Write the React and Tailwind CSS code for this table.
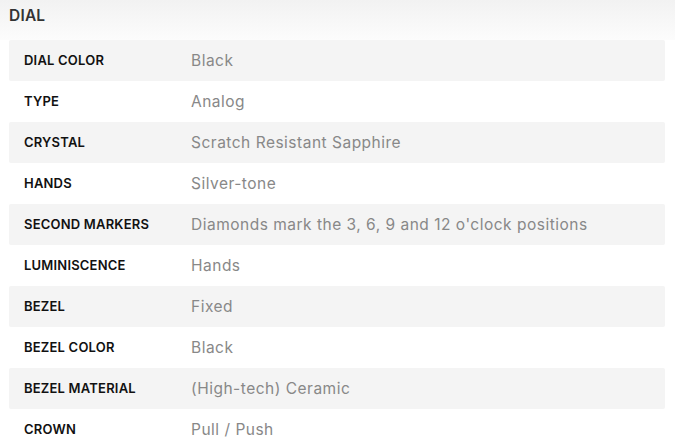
import React from 'react';

const rows = [
  ['Dial Color', 'Black'],
  ['Type', 'Analog'],
  ['Crystal', 'Scratch Resistant Sapphire'],
  ['Hands', 'Silver-tone'],
  ['Second Markers', "Diamonds mark the 3, 6, 9 and 12 o'clock positions"],
  ['Luminiscence', 'Hands'],
  ['Bezel', 'Fixed'],
  ['Bezel Color', 'Black'],
  ['Bezel Material', '(High-tech) Ceramic'],
  ['Crown', 'Pull / Push'],
];

const App = () => {
  return (
    <div className="min-h-screen bg-white font-['Inter',sans-serif]">
      <div className="h-[40px] bg-gradient-to-b from-[#f2f2f2] to-[#fcfcfc] px-[9px] pt-[6px]">
        <h2 className="text-[15.5px] font-semibold text-[#333] leading-[20px] tracking-[0.2px]">DIAL</h2>
      </div>
      <div className="pl-[9px] pr-[10px]">
        {rows.map(([label, value], i) => (
          <div
            key={label}
            className={`flex items-center h-[41px] rounded-[2px] ${i % 2 === 0 ? 'bg-[#f4f4f4]' : 'bg-white'}`}
          >
            <div className="w-[182px] pl-[15px] text-[13px] font-semibold uppercase text-[#111] tracking-[0.2px]">
              {label}
            </div>
            <div className="text-[15.5px] text-[#888] tracking-[0.5px]">{value}</div>
          </div>
        ))}
      </div>
    </div>
  );
};

export default App;
